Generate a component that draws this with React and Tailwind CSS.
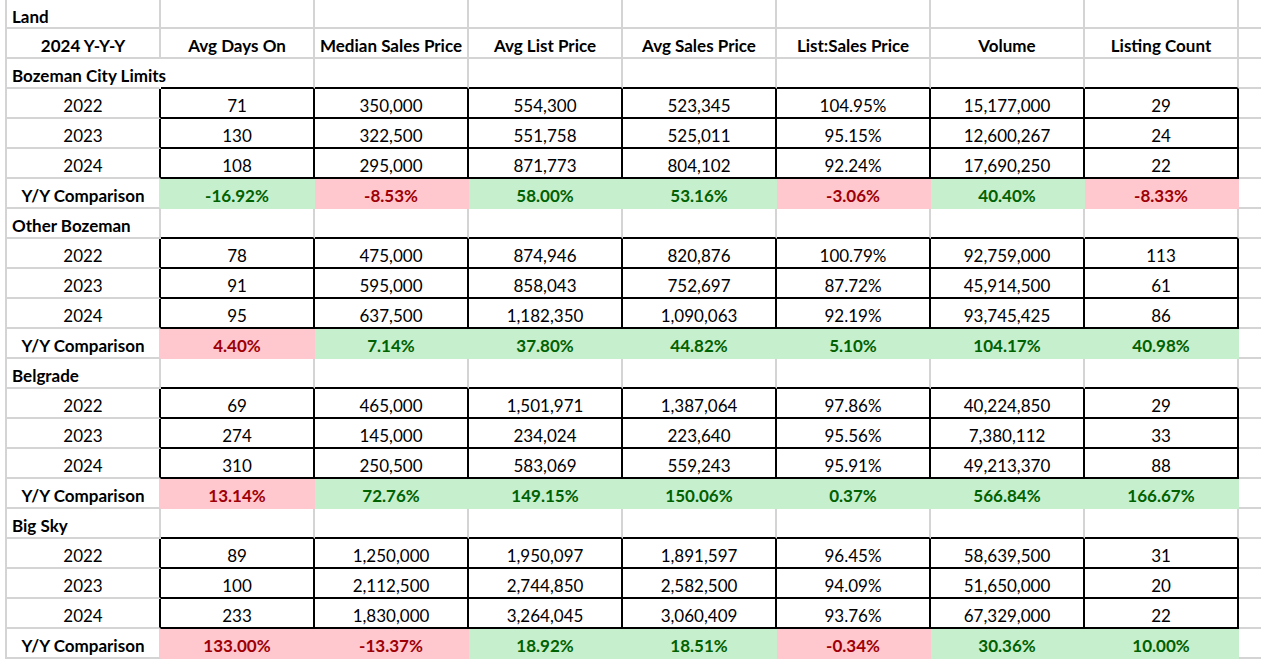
import React from 'react';

const COLS = ['Avg Days On', 'Median Sales Price', 'Avg List Price', 'Avg Sales Price', 'List:Sales Price', 'Volume', 'Listing Count'];

// g = green (good), r = red (bad)
const SECTIONS = [
  {
    name: 'Bozeman City Limits',
    rows: [
      ['2022', '71', '350,000', '554,300', '523,345', '104.95%', '15,177,000', '29'],
      ['2023', '130', '322,500', '551,758', '525,011', '95.15%', '12,600,267', '24'],
      ['2024', '108', '295,000', '871,773', '804,102', '92.24%', '17,690,250', '22'],
    ],
    yy: [['-16.92%', 'g'], ['-8.53%', 'r'], ['58.00%', 'g'], ['53.16%', 'g'], ['-3.06%', 'r'], ['40.40%', 'g'], ['-8.33%', 'r']],
  },
  {
    name: 'Other Bozeman',
    rows: [
      ['2022', '78', '475,000', '874,946', '820,876', '100.79%', '92,759,000', '113'],
      ['2023', '91', '595,000', '858,043', '752,697', '87.72%', '45,914,500', '61'],
      ['2024', '95', '637,500', '1,182,350', '1,090,063', '92.19%', '93,745,425', '86'],
    ],
    yy: [['4.40%', 'r'], ['7.14%', 'g'], ['37.80%', 'g'], ['44.82%', 'g'], ['5.10%', 'g'], ['104.17%', 'g'], ['40.98%', 'g']],
  },
  {
    name: 'Belgrade',
    rows: [
      ['2022', '69', '465,000', '1,501,971', '1,387,064', '97.86%', '40,224,850', '29'],
      ['2023', '274', '145,000', '234,024', '223,640', '95.56%', '7,380,112', '33'],
      ['2024', '310', '250,500', '583,069', '559,243', '95.91%', '49,213,370', '88'],
    ],
    yy: [['13.14%', 'r'], ['72.76%', 'g'], ['149.15%', 'g'], ['150.06%', 'g'], ['0.37%', 'g'], ['566.84%', 'g'], ['166.67%', 'g']],
  },
  {
    name: 'Big Sky',
    rows: [
      ['2022', '89', '1,250,000', '1,950,097', '1,891,597', '96.45%', '58,639,500', '31'],
      ['2023', '100', '2,112,500', '2,744,850', '2,582,500', '94.09%', '51,650,000', '20'],
      ['2024', '233', '1,830,000', '3,264,045', '3,060,409', '93.76%', '67,329,000', '22'],
    ],
    yy: [['133.00%', 'r'], ['-13.37%', 'r'], ['18.92%', 'g'], ['18.51%', 'g'], ['-0.34%', 'r'], ['30.36%', 'g'], ['10.00%', 'g']],
  },
];

const font = { fontFamily: 'Lato, "Open Sans", sans-serif' };

function LabelCell({ children, h = 'h-[30px]', align = 'justify-center', bold, rightBorder = 'border-r-[#d4d4d4]' }) {
  return (
    <div className={`w-[156px] ${h} shrink-0 box-border border-l-2 border-r-2 border-b-2 border-l-[#d4d4d4] border-b-[#d4d4d4] ${rightBorder} flex items-center pt-[5px] ${align} ${bold ? 'font-bold' : ''} whitespace-nowrap overflow-visible relative z-10`}>
      {children}
    </div>
  );
}

function Cell({ children, kind = 'grid', bold, h = 'h-[30px]' }) {
  let cls = 'border-r-[#d4d4d4] border-b-[#d4d4d4]';
  if (kind === 'data') cls = 'border-r-black border-b-black';
  if (kind === 'top') cls = 'border-r-[#d4d4d4] border-b-black';
  if (kind === 'g') cls = 'bg-[#c6efce] border-r-[#c6efce] border-b-[#c6efce] text-[#006100]';
  if (kind === 'r') cls = 'bg-[#ffc7ce] border-r-[#ffc7ce] border-b-[#ffc7ce] text-[#9c0006]';
  return (
    <div className={`w-[154px] ${h} shrink-0 box-border border-r-2 border-b-2 ${cls} flex items-center justify-center pt-[5px] ${bold ? 'font-bold' : ''}`}>
      {children}
    </div>
  );
}

function Filler({ h = 'h-[30px]' }) {
  return <div className={`flex-1 ${h} box-border border-b-2 border-b-[#d4d4d4]`} />;
}

export default function App() {
  return (
    <div className="w-[1261px] h-[669px] bg-white text-black text-[17px] leading-none overflow-hidden pl-[5px]" style={font}>
      {/* row 1 */}
      <div className="flex">
        <LabelCell h="h-[29px]" align="justify-start pl-[5px]" bold>Land</LabelCell>
        {COLS.map((c) => <Cell key={c} h="h-[29px]" />)}
        <Filler h="h-[29px]" />
      </div>
      {/* header */}
      <div className="flex">
        <LabelCell bold>2024 Y-Y-Y</LabelCell>
        {COLS.map((c) => <Cell key={c} bold>{c}</Cell>)}
        <Filler />
      </div>
      {SECTIONS.map((s, si) => (
        <React.Fragment key={s.name}>
          <div className="flex">
            <LabelCell align="justify-start pl-[5px]" bold rightBorder={si === 0 ? 'border-r-white' : 'border-r-[#d4d4d4]'}>{s.name}</LabelCell>
            {COLS.map((c) => <Cell key={c} kind="top" />)}
            <Filler />
          </div>
          {s.rows.map((r) => (
            <div key={r[0]} className="flex">
              <LabelCell rightBorder="border-r-black">{r[0]}</LabelCell>
              {r.slice(1).map((v, i) => <Cell key={i} kind="data">{v}</Cell>)}
              <Filler />
            </div>
          ))}
          <div className="flex">
            <LabelCell bold rightBorder={s.yy[0][1] === 'g' ? 'border-r-[#c6efce]' : 'border-r-[#ffc7ce]'}>Y/Y Comparison</LabelCell>
            {s.yy.map(([v, k], i) => <Cell key={i} kind={k} bold>{v}</Cell>)}
            <Filler />
          </div>
        </React.Fragment>
      ))}
    </div>
  );
}
